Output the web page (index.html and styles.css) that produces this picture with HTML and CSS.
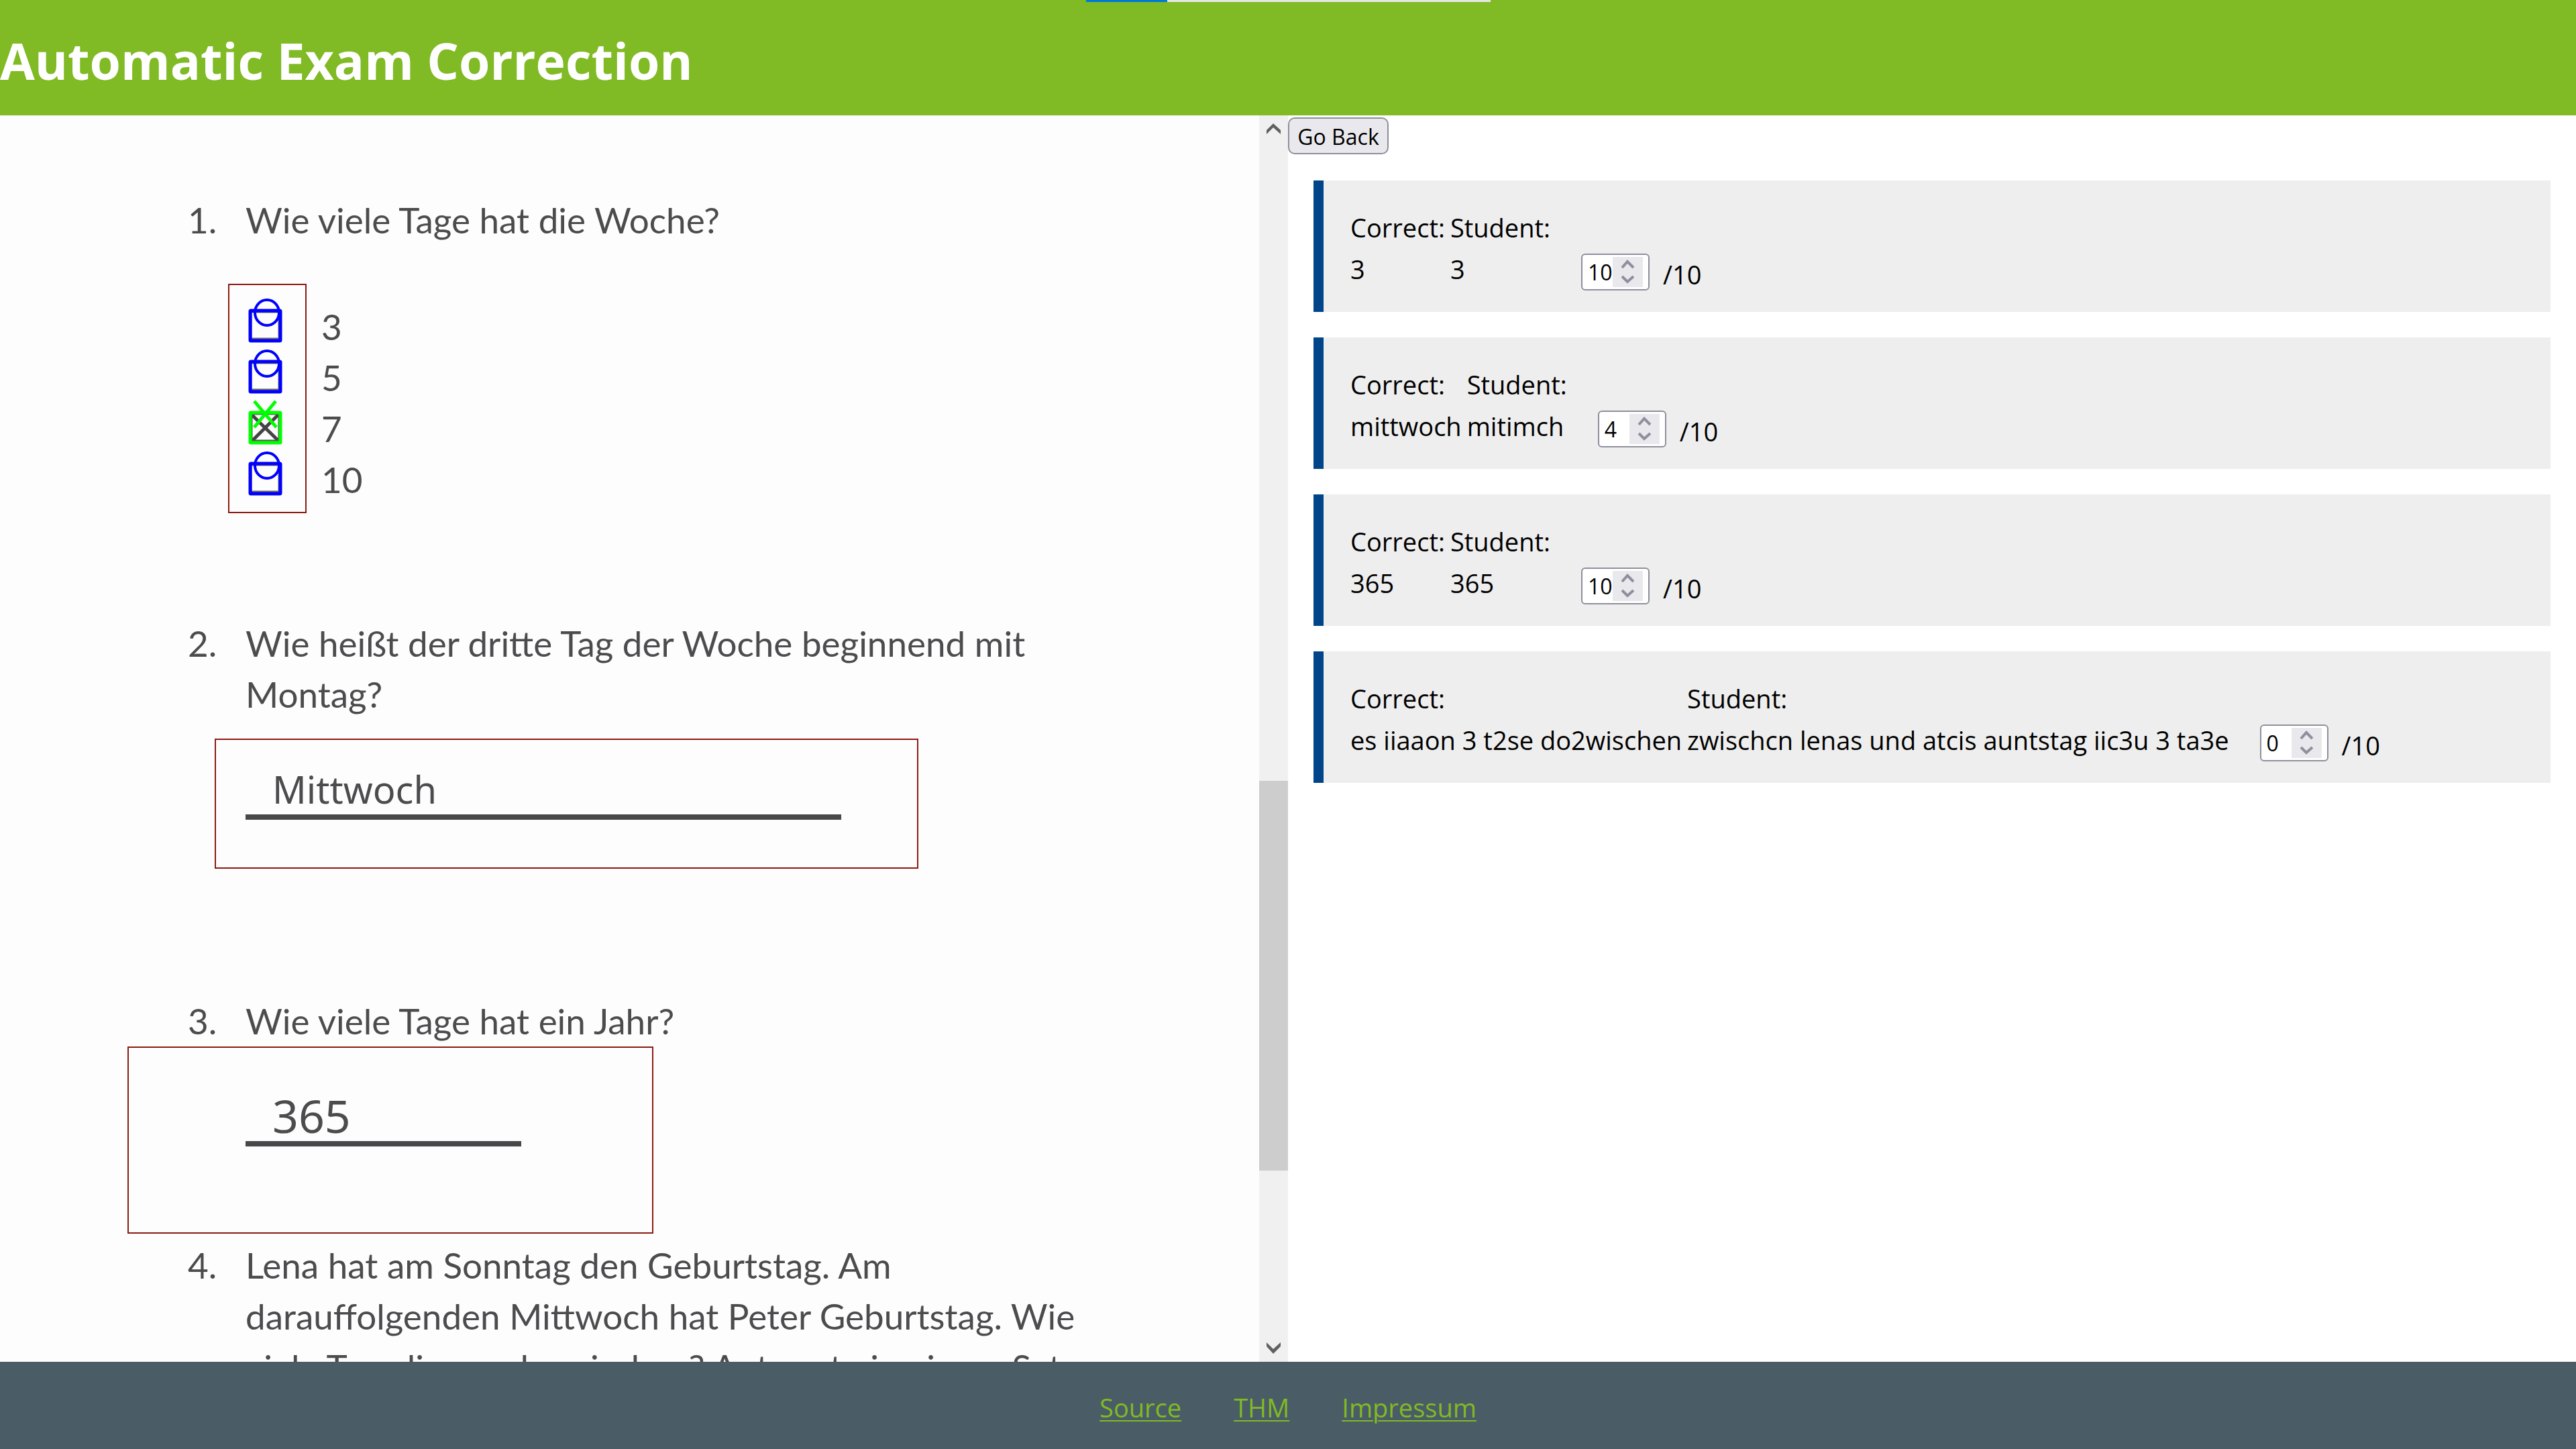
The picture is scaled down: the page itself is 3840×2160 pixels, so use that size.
FILE: index.html
```html
<!DOCTYPE html>
<html lang="en">
<head>
<meta charset="utf-8">
<title>Automatic Exam Correction</title>
<link rel="stylesheet" href="styles.css">
</head>
<body>
<svg class="defs" aria-hidden="true">
  <symbol id="empty" viewBox="0 0 54 76">
    <rect x="6" y="22" width="42" height="40" fill="none" stroke="#666" stroke-width="3"/>
    <rect x="5" y="20" width="45" height="45" rx="1" fill="none" stroke="#00f" stroke-width="5"/>
    <ellipse cx="30" cy="23" rx="18" ry="19" fill="none" stroke="#00f" stroke-width="4"/>
  </symbol>
  <symbol id="crossed" viewBox="0 0 54 76">
    <path d="M8 24 46 61M47 23 8 62" fill="none" stroke="#444" stroke-width="5"/>
    <rect x="7" y="22" width="41" height="40" fill="none" stroke="#555" stroke-width="3"/>
    <rect x="5" y="20" width="45" height="45" rx="1" fill="none" stroke="#0f0" stroke-width="5"/>
    <path d="M11 3 44 42M43 3 11 42" fill="none" stroke="#0f0" stroke-width="5"/>
  </symbol>
  <symbol id="spin" viewBox="0 0 45 45">
    <path d="M14 16 22 7 31 16M14 29 22 37 31 29" fill="none" stroke="#8f8f9d" stroke-width="4"/>
  </symbol>
</svg>

<header class="header">
  <div class="progress"><div class="progress-done"></div></div>
  <h1 class="title">Automatic Exam Correction</h1>
</header>

<main class="main">
  <section class="viewer">
    <div class="sheet">
      <div class="question"><span>1.</span><p>Wie viele Tage hat die Woche?</p></div>
      <div class="choices">
        <div class="region region-choices">
          <svg class="mark"><use href="#empty"/></svg>
          <svg class="mark"><use href="#empty"/></svg>
          <svg class="mark"><use href="#crossed"/></svg>
          <svg class="mark"><use href="#empty"/></svg>
        </div>
        <ul class="options"><li>3</li><li>5</li><li>7</li><li>10</li></ul>
      </div>

      <div class="question"><span>2.</span><p>Wie heißt der dritte Tag der Woche beginnend mit<br>Montag?</p></div>
      <div class="region region-word"><p class="handwriting">Mittwoch</p></div>

      <div class="question"><span>3.</span><p>Wie viele Tage hat ein Jahr?</p></div>
      <div class="region region-number"><p class="handwriting digits">365</p></div>

      <div class="question last"><span>4.</span><p>Lena hat am Sonntag den Geburtstag. Am<br>darauffolgenden Mittwoch hat Peter Geburtstag. Wie<br>viele Tage liegen dazwischen? Antworte in einem Satz.</p></div>
    </div>
    <div class="scrollbar">
      <svg class="arrow" viewBox="0 0 43 43"><path d="M11 22 21 12 32 22V28L21 18 11 28Z" fill="#606060"/></svg>
      <div class="track"><div class="thumb"></div></div>
      <svg class="arrow" viewBox="0 0 43 43"><path d="M11 14 21 24 32 14V20L21 31 11 20Z" fill="#606060"/></svg>
    </div>
  </section>

  <section class="results">
    <button class="back" type="button">Go Back</button>

    <article class="card">
      <table class="answers">
        <tr><th>Correct:</th><th>Student:</th></tr>
        <tr><td>3</td><td>3</td></tr>
      </table>
      <div class="score"><span class="field"><input id="s1" type="number" value="10"><svg class="spinner"><use href="#spin"/></svg></span><label for="s1">/10</label></div>
    </article>

    <article class="card">
      <table class="answers">
        <tr><th>Correct:</th><th>Student:</th></tr>
        <tr><td>mittwoch</td><td>mitimch</td></tr>
      </table>
      <div class="score"><span class="field"><input id="s2" type="number" value="4"><svg class="spinner"><use href="#spin"/></svg></span><label for="s2">/10</label></div>
    </article>

    <article class="card">
      <table class="answers">
        <tr><th>Correct:</th><th>Student:</th></tr>
        <tr><td>365</td><td>365</td></tr>
      </table>
      <div class="score"><span class="field"><input id="s3" type="number" value="10"><svg class="spinner"><use href="#spin"/></svg></span><label for="s3">/10</label></div>
    </article>

    <article class="card">
      <table class="answers">
        <tr><th>Correct:</th><th>Student:</th></tr>
        <tr><td>es iiaaon 3 t2se do2wischen</td><td>zwischcn lenas und atcis auntstag iic3u 3 ta3e</td></tr>
      </table>
      <div class="score"><span class="field"><input id="s4" type="number" value="0"><svg class="spinner"><use href="#spin"/></svg></span><label for="s4">/10</label></div>
    </article>
  </section>
</main>

<footer class="footer">
  <a href="#source">Source</a>
  <a href="#thm">THM</a>
  <a href="#impressum">Impressum</a>
</footer>
</body>
</html>
```
FILE: styles.css
```css
* { box-sizing: border-box; }

body {
  margin: 0;
  height: 100vh;
  display: flex;
  flex-direction: column;
  font-family: "Open Sans", "Noto Sans", sans-serif;
  font-size: 38px;
  line-height: 52px;
  color: #000;
  background: #fff;
}

p, ul { margin: 0; padding: 0; list-style: none; }

.defs { position: absolute; width: 0; height: 0; }

/* Header */
.header {
  position: relative;
  padding: 40px 0 32px;
  color: #fff;
  background: #80ba24;
}

.title {
  margin: 0;
  font-size: 75px;
  line-height: 100px;
}

.progress {
  position: absolute;
  top: 0;
  left: 50%;
  width: 603px;
  margin-left: -301px;
  background: #e5e5e5;
}

.progress-done {
  width: 20%;
  height: 3px;
  background: #0078d7;
}

/* Two panes */
.main {
  flex: 1;
  min-height: 0;
  display: grid;
  grid-template-columns: 1fr 1fr;
}

.viewer {
  display: flex;
  min-height: 0;
  background: #fdfdfd;
}

.sheet {
  flex: 1;
  overflow: hidden;
  padding: 118px 0 0 190px;
  font-family: Lato, sans-serif;
  font-size: 53px;
  line-height: 76px;
  color: #4c4c4e;
}

.question {
  display: grid;
  grid-template-columns: 86px 1fr;
  margin-left: 90px;
  white-space: nowrap;
}

.question.last { margin-top: 9px; }

.region { border: 2px solid #8b1a12; }

.choices {
  display: flex;
  gap: 22px;
  margin: 57px 0 156px 150px;
}

.region-choices {
  width: 117px;
  height: 342px;
  padding: 18px 0 0 26px;
}

.mark {
  display: block;
  width: 54px;
  height: 76px;
}

.options { padding-top: 26px; }

.region-word {
  width: 1049px;
  height: 194px;
  margin: 28px 0 189px 130px;
  padding: 35px 113px 0 44px;
}

.region-number {
  width: 784px;
  height: 279px;
  padding: 63px 195px 0 174px;
}

.handwriting {
  padding-left: 40px;
  border-bottom: 8px solid #48484a;
  font-family: "Noto Sans", sans-serif;
  font-size: 56px;
}

.handwriting.digits { font-size: 68px; }

/* Scrollbar of the sheet */
.scrollbar {
  width: 43px;
  display: flex;
  flex-direction: column;
  background: #f0f0f0;
}

.arrow {
  width: 43px;
  height: 43px;
}

.track {
  flex: 1;
  display: flex;
  flex-direction: column;
  padding: 949px 0 242px;
}

.thumb {
  flex: 1;
  background: #cdcdcd;
}

/* Results */
.results { padding-top: 3px; }

.back {
  display: block;
  height: 55px;
  width: 150px;
  margin-bottom: 39px;
  padding: 2px 0 0;
  border: 2px solid #8f8f9d;
  border-radius: 10px;
  background: #e9e9ed;
  color: #000;
  font: 32px "Open Sans", sans-serif;
}

.card {
  display: flex;
  gap: 46px;
  height: 196px;
  margin: 0 38px 38px;
  padding: 39px 38px 0;
  border-left: 15px solid #00448a;
  background: #eee;
}

.answers {
  height: 124px;
  border-spacing: 0;
  white-space: nowrap;
}

.answers th, .answers td {
  padding: 5px 6px 5px 2px;
  text-align: left;
  font-weight: 400;
}

.answers th:last-child, .answers td:last-child { padding-right: 0; }

.score {
  display: flex;
  align-items: flex-start;
  gap: 20px;
  padding-top: 70px;
}

.score label { padding-top: 5px; }

.field {
  display: flex;
  align-items: center;
  width: 102px;
  height: 55px;
  padding: 0 8px;
  border: 2px solid #8f8f9d;
  border-radius: 6px;
  background: #fff;
}

.field input {
  flex: 1;
  min-width: 0;
  padding: 0;
  border: 0;
  background: none;
  color: #000;
  font: 32px "Open Sans", sans-serif;
  appearance: textfield;
}

.field input::-webkit-inner-spin-button { display: none; }

.spinner {
  width: 45px;
  height: 45px;
  background: #e9e9ed;
}

/* Footer */
.footer {
  display: flex;
  justify-content: center;
  gap: 78px;
  padding: 42px 0 36px;
  background: #4a5c66;
}

.footer a { color: #80ba24; text-underline-offset: 4px; text-decoration-thickness: 2px; }
```
